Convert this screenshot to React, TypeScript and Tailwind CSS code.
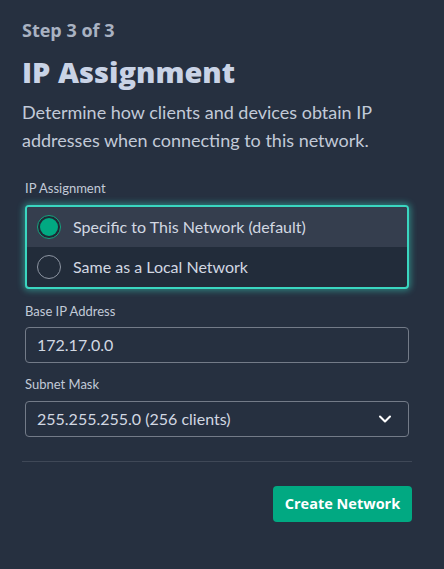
import { ChevronDown } from 'lucide-react';

function Radio({ checked, label }: { checked: boolean; label: string }) {
  return (
    <div className={checked ? 'flex items-center h-[40px] px-[10px] gap-[12px] bg-[#353e4e]' : 'flex items-center h-[40px] px-[10px] gap-[12px]'}>
      {checked ? (
        <span className="w-[24px] h-[24px] rounded-full border border-[#17a37f] flex items-center justify-center bg-[#1f2a36]">
          <span className="w-[18px] h-[18px] rounded-full bg-[#01a982]" />
        </span>
      ) : (
        <span className="w-[24px] h-[24px] rounded-full border border-[#8d95a2]" />
      )}
      <span className="text-[16px] text-[#d2d8e2]">{label}</span>
    </div>
  );
}

export default function App() {
  return (
    <div className="w-[444px] h-[569px] bg-[#263040] pl-[22px] pr-[32px] pt-[18px] font-['Lato',sans-serif] text-[#c8d0de]">
      <div className="text-[18px] font-bold font-['Open_Sans',sans-serif] text-[#a9b2c2] leading-[24px]">Step 3 of 3</div>
      <h1 className="mt-[12px] text-[29px] font-extrabold font-['Open_Sans',sans-serif] text-[#c9d3e6] leading-[36px]">IP Assignment</h1>
      <p className="mt-[8px] text-[18px] leading-[28px] text-[#c2cad8]">
        Determine how clients and devices obtain IP addresses when connecting to this network.
      </p>

      <div className="mt-[26px] px-[3px]">
        <div className="text-[13px] leading-[16px] text-[#c2cad8]">IP Assignment</div>
        <div className="mt-[9px] rounded-[4px] border-2 border-[#3ad6c0] shadow-[0_0_6px_2px_rgba(58,214,192,0.45)] overflow-hidden bg-[#222c3a]">
          <Radio checked label="Specific to This Network (default)" />
          <Radio checked={false} label="Same as a Local Network" />
        </div>

        <div className="mt-[14px] text-[13px] leading-[16px] text-[#c2cad8]">Base IP Address</div>
        <div className="mt-[8px] h-[36px] rounded-[4px] border border-[#737b88] flex items-center px-[11px] text-[16px] text-[#d2d8e2]">
          172.17.0.0
        </div>

        <div className="mt-[13px] text-[13px] leading-[16px] text-[#c2cad8]">Subnet Mask</div>
        <div className="mt-[9px] h-[36px] rounded-[4px] border border-[#737b88] flex items-center justify-between px-[11px] text-[16px] text-[#d2d8e2]">
          <span>255.255.255.0 (256 clients)</span>
          <ChevronDown size={20} strokeWidth={2.5} className="text-white mr-[2px]" />
        </div>
      </div>

      <div className="mt-[24px] h-px bg-[#3f4857]" />

      <div className="mt-[24px] flex justify-end">
        <button className="h-[36px] w-[139px] rounded-[4px] bg-[#01a982] text-white text-[14.5px] font-bold font-['Open_Sans',sans-serif]">
          Create Network
        </button>
      </div>
    </div>
  );
}
